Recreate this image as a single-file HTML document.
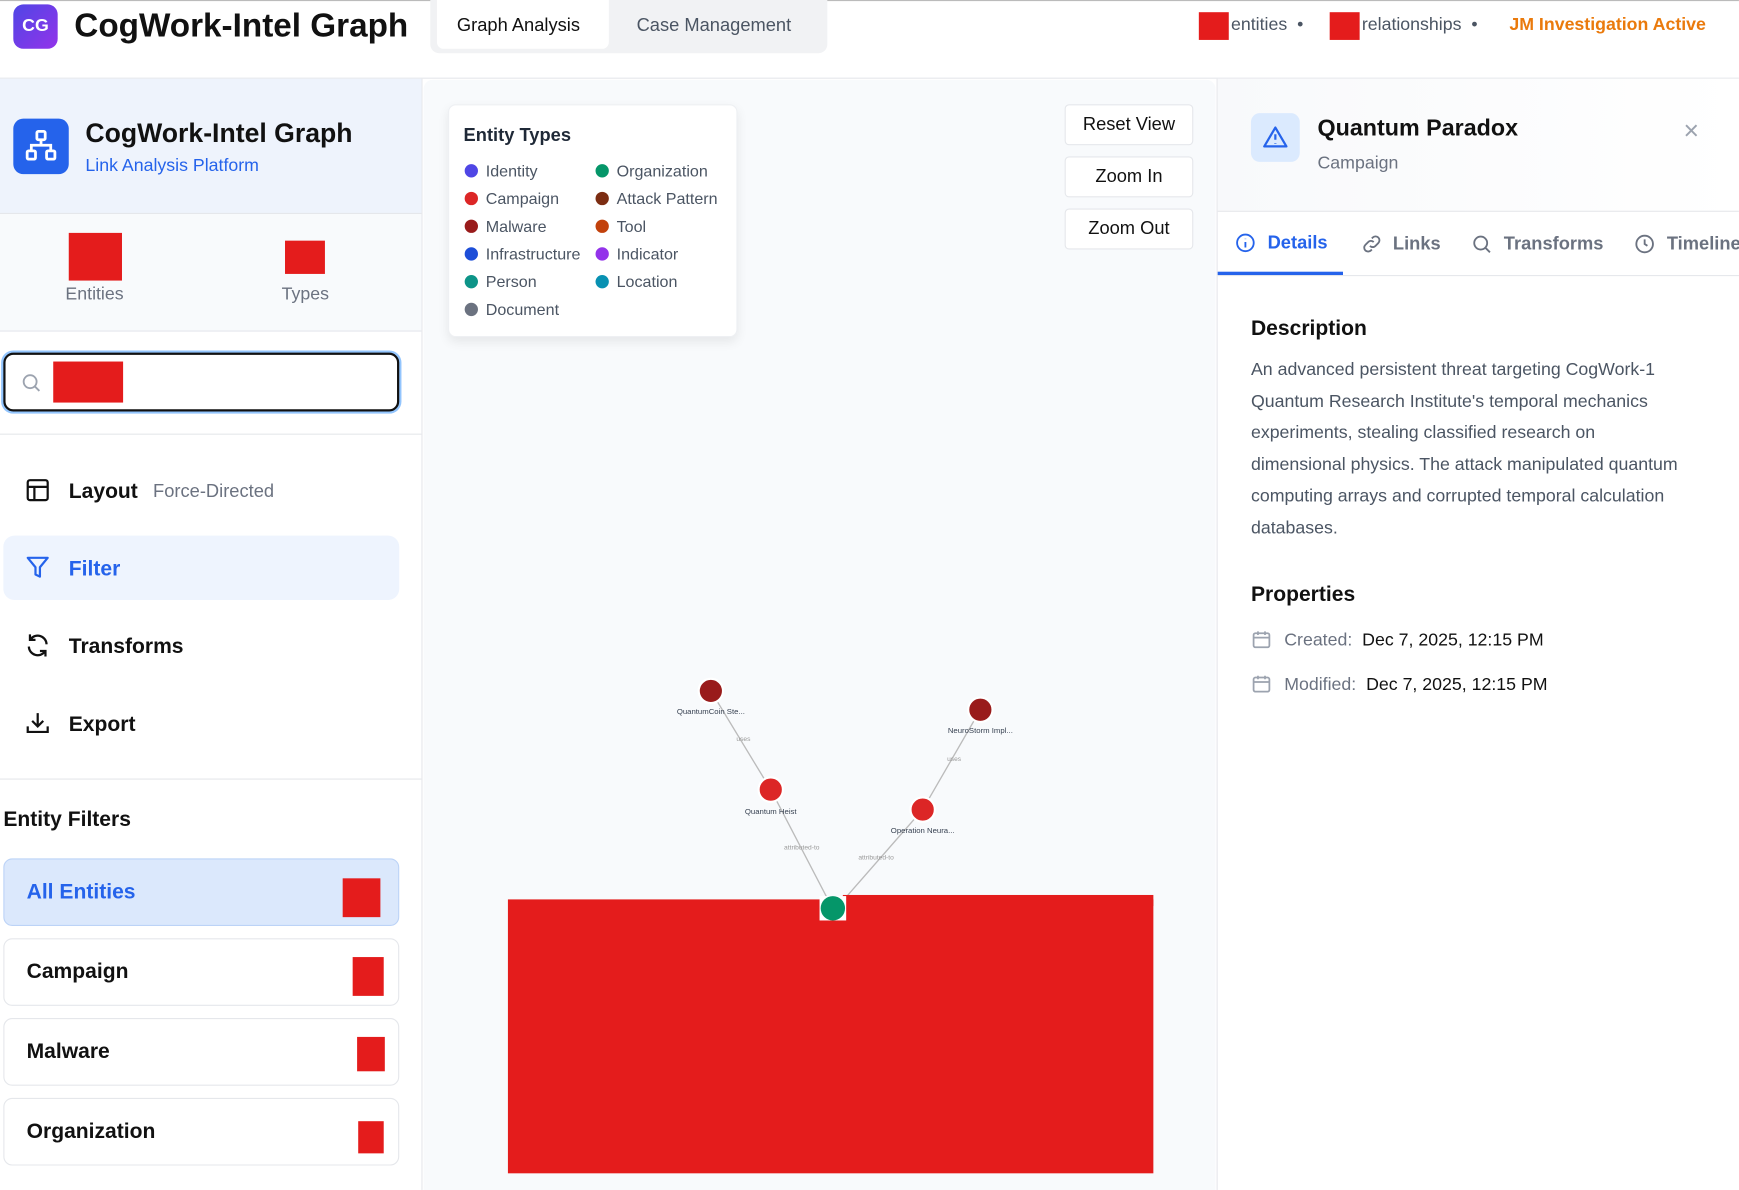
<!DOCTYPE html>
<html><head><meta charset="utf-8"><style>
html,body{margin:0;padding:0;width:1739px;height:1190px;overflow:hidden;background:#fff;font-family:"Liberation Sans",sans-serif;}
#s{position:absolute;left:0;top:0;width:1568px;height:1073px;transform:scale(1.109);transform-origin:0 0;}
.a{position:absolute;}
.red{position:absolute;background:#e41c1c;}
.t{position:absolute;white-space:nowrap;}
.leg{font-size:14.5px;color:#4b5563;}
.leg i{display:inline-block;width:12px;height:12px;border-radius:50%;vertical-align:-1px;margin-right:7px;}
.btn{position:absolute;left:960px;width:114px;height:35px;background:#fff;border:1px solid #e5e7eb;border-radius:4px;font-size:16.5px;color:#111;text-align:center;line-height:35px;}
.menu{position:absolute;left:22px;font-size:19px;font-weight:bold;color:#111;}
.ef{position:absolute;left:3px;width:355px;height:59px;border:1px solid #e5e7eb;border-radius:8px;background:#fff;}
.ef span{position:absolute;left:20px;top:19px;font-size:19px;font-weight:bold;color:#111;}
</style></head><body><div id="s">
<!-- header -->
<div class="a" style="left:0;top:0;width:1568px;height:1px;background:#bbb"></div>
<div class="a" style="left:0;top:70px;width:1568px;height:1px;background:#e5e7eb"></div>
<div class="a" style="left:12px;top:4px;width:40px;height:40px;border-radius:9px;background:linear-gradient(135deg,#4f46e5,#9333ea);color:#fff;font-weight:bold;font-size:16px;text-align:center;line-height:40px">CG</div>
<div class="t" style="left:67px;top:7px;font-size:30px;font-weight:bold;color:#111">CogWork-Intel Graph</div>
<div class="a" style="left:388px;top:0;width:358px;height:48px;background:#f1f2f4;border-radius:0 0 8px 8px"></div>
<div class="a" style="left:394px;top:0;width:155px;height:44px;background:#fff;border-radius:0 0 6px 6px"></div>
<div class="t" style="left:412px;top:14px;font-size:16.5px;color:#111">Graph Analysis</div>
<div class="t" style="left:574px;top:14px;font-size:16.5px;color:#4b5563">Case Management</div>
<div class="red" style="left:1081px;top:11px;width:27px;height:25px"></div>
<div class="t" style="left:1110px;top:14px;font-size:16px;color:#4b5563">entities &nbsp;•</div>
<div class="red" style="left:1199px;top:11px;width:27px;height:25px"></div>
<div class="t" style="left:1228px;top:14px;font-size:16px;color:#4b5563">relationships &nbsp;•</div>
<div class="t" style="left:1361px;top:14px;font-size:16px;color:#ea7a0c;font-weight:bold">JM Investigation Active</div>
<!-- left sidebar -->
<div class="a" style="left:380px;top:71px;width:1px;height:1002px;background:#e5e7eb"></div>
<div class="a" style="left:0;top:71px;width:380px;height:121px;background:#eef3fc;border-bottom:1px solid #e5e7eb"></div>
<div class="a" style="left:12px;top:107px;width:50px;height:50px;border-radius:9px;background:#2563eb"></div>
<svg class="a" style="left:22px;top:116px" width="30" height="30" viewBox="0 0 24 24" fill="none" stroke="#fff" stroke-width="2"><rect x="9" y="2" width="6" height="6" rx="1"/><rect x="2" y="16" width="6" height="6" rx="1"/><rect x="16" y="16" width="6" height="6" rx="1"/><path d="M12 8v4M5 16v-4h14v4"/></svg>
<div class="t" style="left:77px;top:107px;font-size:24px;font-weight:bold;color:#111">CogWork-Intel Graph</div>
<div class="t" style="left:77px;top:141px;font-size:16px;color:#2563eb">Link Analysis Platform</div>
<div class="a" style="left:0;top:193px;width:380px;height:105px;background:#f8fafc;border-bottom:1px solid #e5e7eb"></div>
<div class="red" style="left:62px;top:210px;width:48px;height:43px"></div>
<div class="t" style="left:59px;top:257px;font-size:16px;color:#6b7280">Entities</div>
<div class="red" style="left:257px;top:217px;width:36px;height:30px"></div>
<div class="t" style="left:254px;top:257px;font-size:16px;color:#6b7280">Types</div>
<div class="a" style="left:3px;top:318px;width:353px;height:49px;border:2px solid #111;border-radius:9px;box-shadow:0 0 0 2px #93c5fd;background:#fff"></div>
<svg class="a" style="left:18px;top:335px" width="20" height="20" viewBox="0 0 24 24" fill="none" stroke="#9ca3af" stroke-width="2"><circle cx="11" cy="11" r="7"/><path d="M16 16l5 5"/></svg>
<div class="red" style="left:48px;top:326px;width:63px;height:37px"></div>
<div class="a" style="left:0;top:391px;width:380px;height:1px;background:#e5e7eb"></div>
<svg class="a" style="left:22px;top:430px" width="24" height="24" viewBox="0 0 24 24" fill="none" stroke="#111" stroke-width="2"><rect x="3" y="3" width="18" height="18" rx="2"/><path d="M3 9h18M9 9v12"/></svg>
<div class="menu" style="left:62px;top:433px">Layout</div>
<div class="t" style="left:138px;top:434px;font-size:16.5px;color:#6b7280">Force-Directed</div>
<div class="a" style="left:3px;top:483px;width:357px;height:58px;background:#eef4fe;border-radius:10px"></div>
<svg class="a" style="left:22px;top:500px" width="24" height="24" viewBox="0 0 24 24" fill="none" stroke="#2563eb" stroke-width="2" stroke-linejoin="round"><path d="M3 3h18l-7 8.5V20l-4 -2v-6.5z"/></svg>
<div class="menu" style="left:62px;top:503px;color:#2563eb">Filter</div>
<svg class="a" style="left:22px;top:570px" width="24" height="24" viewBox="0 0 24 24" fill="none" stroke="#111" stroke-width="2"><path d="M20 11a8 8 0 0 0-14.5-4.5M4 13a8 8 0 0 0 14.5 4.5M5 2v5h5M19 22v-5h-5"/></svg>
<div class="menu" style="left:62px;top:573px">Transforms</div>
<svg class="a" style="left:22px;top:640px" width="24" height="24" viewBox="0 0 24 24" fill="none" stroke="#111" stroke-width="2"><path d="M12 3v12M7 10l5 5 5-5M3 15v5h18v-5"/></svg>
<div class="menu" style="left:62px;top:643px">Export</div>
<div class="a" style="left:0;top:702px;width:380px;height:1px;background:#e5e7eb"></div>
<div class="t" style="left:3px;top:729px;font-size:19px;color:#111;font-weight:bold">Entity Filters</div>
<div class="ef" style="top:774px;background:#dbe8fc;border-color:#bcd3f7"><span style="color:#2563eb">All Entities</span></div>
<div class="red" style="left:309px;top:792px;width:34px;height:35px"></div>
<div class="ef" style="top:846px"><span>Campaign</span></div>
<div class="red" style="left:318px;top:863px;width:28px;height:35px"></div>
<div class="ef" style="top:918px"><span>Malware</span></div>
<div class="red" style="left:322px;top:935px;width:25px;height:31px"></div>
<div class="ef" style="top:990px"><span>Organization</span></div>
<div class="red" style="left:323px;top:1011px;width:23px;height:29px"></div>
<!-- canvas -->
<div class="a" style="left:382px;top:72px;width:714px;height:1001px;background:#f8fafc;border-radius:8px 8px 0 0"></div>
<div class="a" style="left:404px;top:94px;width:259px;height:208px;background:#fff;border:1px solid #eef0f3;border-radius:7px;box-shadow:0 4px 10px rgba(0,0,0,.08)"></div>
<div class="t" style="left:418px;top:113px;font-size:16.5px;color:#1f2937;font-weight:bold">Entity Types</div>
<div class="t leg" style="left:419px;top:147px"><i style="background:#4f46e5"></i>Identity</div>
<div class="t leg" style="left:419px;top:172px"><i style="background:#dc2626"></i>Campaign</div>
<div class="t leg" style="left:419px;top:197px"><i style="background:#991b1b"></i>Malware</div>
<div class="t leg" style="left:419px;top:222px"><i style="background:#1d4ed8"></i>Infrastructure</div>
<div class="t leg" style="left:419px;top:247px"><i style="background:#0d9488"></i>Person</div>
<div class="t leg" style="left:419px;top:272px"><i style="background:#6b7280"></i>Document</div>
<div class="t leg" style="left:537px;top:147px"><i style="background:#059669"></i>Organization</div>
<div class="t leg" style="left:537px;top:172px"><i style="background:#7c2d12"></i>Attack Pattern</div>
<div class="t leg" style="left:537px;top:197px"><i style="background:#c2410c"></i>Tool</div>
<div class="t leg" style="left:537px;top:222px"><i style="background:#9333ea"></i>Indicator</div>
<div class="t leg" style="left:537px;top:247px"><i style="background:#0891b2"></i>Location</div>
<div class="btn" style="top:94px">Reset View</div>
<div class="btn" style="top:141px">Zoom In</div>
<div class="btn" style="top:188px">Zoom Out</div>
<svg class="a" style="left:382px;top:72px" width="714" height="1001">
<g stroke="#bbb" stroke-width="1.2"><line x1="259" y1="551" x2="313" y2="640"/><line x1="313" y1="640" x2="364" y2="738"/><line x1="502" y1="568" x2="450" y2="658"/><line x1="450" y1="658" x2="380" y2="738"/></g>
<g font-size="6" fill="#999" font-family="Liberation Sans"><text x="282" y="596">uses</text><text x="472" y="614">uses</text><text x="325" y="694">attributed-to</text><text x="392" y="703">attributed-to</text></g>
<g stroke="#fff" stroke-width="2"><circle cx="259" cy="551" r="11" fill="#991b1b"/><circle cx="313" cy="640" r="11" fill="#dc2626"/><circle cx="450" cy="658" r="11" fill="#dc2626"/><circle cx="502" cy="568" r="11" fill="#991b1b"/></g>
<g font-size="7" fill="#374151" font-family="Liberation Sans" text-anchor="middle"><text x="259" y="572">QuantumCoin Ste...</text><text x="313" y="662">Quantum Heist</text><text x="450" y="679">Operation Neura...</text><text x="502" y="589">NeuroStorm Impl...</text></g>
</svg>
<div class="red" style="left:458px;top:811px;width:582px;height:247px"></div>
<div class="red" style="left:760px;top:807px;width:280px;height:10px"></div>
<div class="a" style="left:739px;top:808px;width:24px;height:22px;background:#fff"></div>
<div class="a" style="left:740px;top:808px;width:22px;height:22px;border-radius:50%;background:#059669"></div>
<!-- right panel -->
<div class="a" style="left:1097px;top:71px;width:1px;height:1002px;background:#e5e7eb"></div>
<div class="a" style="left:1098px;top:71px;width:470px;height:119px;background:linear-gradient(90deg,#f8f9fb,#fff);border-bottom:1px solid #e5e7eb"></div>
<div class="a" style="left:1128px;top:102px;width:44px;height:44px;border-radius:8px;background:#dbeafe"></div>
<svg class="a" style="left:1138px;top:112px" width="24" height="24" viewBox="0 0 24 24" fill="none" stroke="#2563eb" stroke-width="2" stroke-linejoin="round"><path d="M12 3L2 20h20z"/><path d="M12 9v5M12 17v.5"/></svg>
<div class="t" style="left:1188px;top:104px;font-size:21px;font-weight:bold;color:#111">Quantum Paradox</div>
<div class="t" style="left:1188px;top:139px;font-size:16px;color:#6b7280">Campaign</div>
<div class="t" style="left:1518px;top:105px;font-size:24px;color:#9ca3af">×</div>
<div class="a" style="left:1098px;top:248px;width:470px;height:1px;background:#e5e7eb"></div>
<div class="a" style="left:1098px;top:245px;width:113px;height:3px;background:#2563eb"></div>
<svg class="a" style="left:1113px;top:209px" width="20" height="20" viewBox="0 0 24 24" fill="none" stroke="#2563eb" stroke-width="2"><circle cx="12" cy="12" r="9"/><path d="M12 11v6M12 7.5v.5"/></svg>
<div class="t" style="left:1143px;top:210px;font-size:16.5px;color:#2563eb;font-weight:bold">Details</div>
<svg class="a" style="left:1227px;top:210px" width="20" height="20" viewBox="0 0 24 24" fill="none" stroke="#6b7280" stroke-width="2"><path d="M10 14a4 4 0 0 0 6 0l3-3a4 4 0 0 0-6-6l-1 1M14 10a4 4 0 0 0-6 0l-3 3a4 4 0 0 0 6 6l1-1"/></svg>
<div class="t" style="left:1256px;top:211px;font-size:16.5px;color:#6b7280;font-weight:bold">Links</div>
<svg class="a" style="left:1326px;top:210px" width="20" height="20" viewBox="0 0 24 24" fill="none" stroke="#6b7280" stroke-width="2"><circle cx="11" cy="11" r="7"/><path d="M16 16l5 5"/></svg>
<div class="t" style="left:1356px;top:211px;font-size:16.5px;color:#6b7280;font-weight:bold">Transforms</div>
<svg class="a" style="left:1473px;top:210px" width="20" height="20" viewBox="0 0 24 24" fill="none" stroke="#6b7280" stroke-width="2"><circle cx="12" cy="12" r="9"/><path d="M12 7v5l3 2"/></svg>
<div class="t" style="left:1503px;top:211px;font-size:16.5px;color:#6b7280;font-weight:bold">Timeline</div>
<div class="t" style="left:1128px;top:286px;font-size:19px;font-weight:bold;color:#111">Description</div>
<div class="a" style="left:1128px;top:320px;width:440px;font-size:16px;line-height:28.5px;color:#4b5563;white-space:nowrap">An advanced persistent threat targeting CogWork-1<br>Quantum Research Institute's temporal mechanics<br>experiments, stealing classified research on<br>dimensional physics. The attack manipulated quantum<br>computing arrays and corrupted temporal calculation<br>databases.</div>
<div class="t" style="left:1128px;top:526px;font-size:19px;font-weight:bold;color:#111">Properties</div>
<svg class="a" style="left:1128px;top:567px" width="19" height="19" viewBox="0 0 24 24" fill="none" stroke="#9ca3af" stroke-width="2"><rect x="3" y="5" width="18" height="16" rx="2"/><path d="M3 10h18M8 3v4M16 3v4"/></svg>
<div class="t" style="left:1158px;top:569px;font-size:16px;color:#6b7280">Created: &nbsp;<span style="color:#111">Dec 7, 2025, 12:15 PM</span></div>
<svg class="a" style="left:1128px;top:607px" width="19" height="19" viewBox="0 0 24 24" fill="none" stroke="#9ca3af" stroke-width="2"><rect x="3" y="5" width="18" height="16" rx="2"/><path d="M3 10h18M8 3v4M16 3v4"/></svg>
<div class="t" style="left:1158px;top:609px;font-size:16px;color:#6b7280">Modified: &nbsp;<span style="color:#111">Dec 7, 2025, 12:15 PM</span></div>
</div></body></html>
